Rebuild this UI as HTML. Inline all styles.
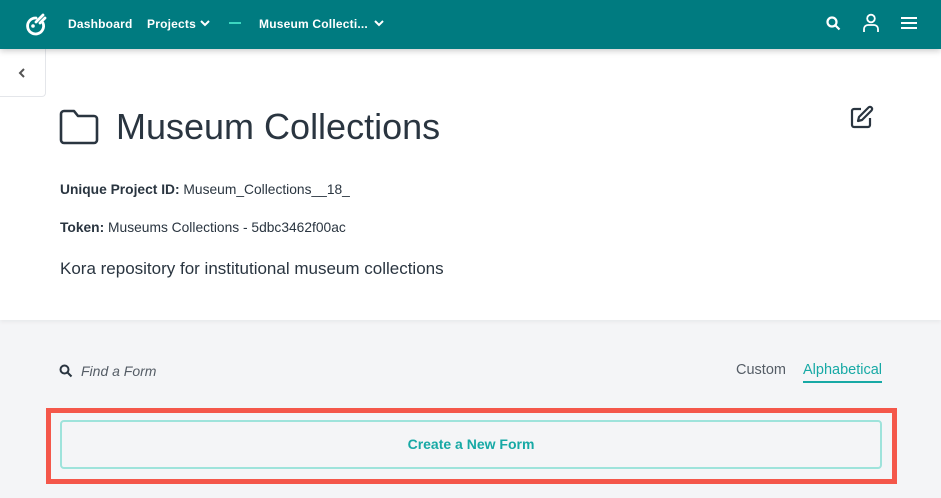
<!DOCTYPE html>
<html><head><style>
*{margin:0;padding:0;box-sizing:border-box}
body{width:941px;height:498px;overflow:hidden;background:#f4f5f7;font-family:"Liberation Sans",sans-serif;position:relative;color:#2a3540}
.nav{position:absolute;left:0;top:0;width:941px;height:49px;background:#007b80;box-shadow:0 2px 6px rgba(0,0,0,.2);z-index:2}
.nav span{position:absolute;top:17px;color:#fff;font-size:12px;font-weight:bold;letter-spacing:0.2px}
.top{position:absolute;left:0;top:49px;width:941px;height:271px;background:#fff;box-shadow:0 2px 4px rgba(0,0,0,.05)}
.back{position:absolute;left:0;top:49px;width:46px;height:48px;border:1px solid #e4e6ea;border-left:none;border-top:none;border-radius:0 0 4px 0;background:#fff}
h1{position:absolute;left:116px;top:106px;font-size:36px;font-weight:normal;color:#2a3540}
.t{position:absolute;left:60px;font-size:13.8px;color:#2a3540}
</style></head><body>
<div class="nav">
<svg style="position:absolute;left:22px;top:10px" width="28" height="28" viewBox="0 0 28 28" fill="none" stroke="#fff" stroke-width="2.8" stroke-linecap="round"><path d="M14 8a8 8 0 1 0 7 5"/><circle cx="11" cy="16" r="1.8" fill="#fff" stroke="none"/><path d="M14 12l7-7M18 13l5-5"/></svg>
<span style="left:68px">Dashboard</span>
<span style="left:147px">Projects</span>
<svg style="position:absolute;left:199px;top:19px" width="12" height="9" viewBox="0 0 12 9" fill="none" stroke="#fff" stroke-width="2"><path d="M2 2l4 4 4-4"/></svg>
<div style="position:absolute;left:229px;top:22px;width:12px;height:2px;background:#3cd6c0"></div>
<span style="left:259px">Museum Collecti...</span>
<svg style="position:absolute;left:373px;top:19px" width="12" height="9" viewBox="0 0 12 9" fill="none" stroke="#fff" stroke-width="2"><path d="M2 2l4 4 4-4"/></svg>
<svg style="position:absolute;left:825px;top:15px" width="17" height="17" viewBox="0 0 17 17" fill="none" stroke="#fff" stroke-width="2.2"><circle cx="7" cy="7" r="4.5"/><path d="M10.5 10.5l4 4"/></svg>
<svg style="position:absolute;left:862px;top:13px" width="18" height="20" viewBox="0 0 18 20" fill="none" stroke="#fff" stroke-width="1.8"><circle cx="9" cy="5.5" r="3.8"/><path d="M2 19v-3a4 4 0 0 1 4-4h6a4 4 0 0 1 4 4v3"/></svg>
<svg style="position:absolute;left:900px;top:15px" width="18" height="16" viewBox="0 0 18 16" stroke="#fff" stroke-width="2"><path d="M1 3h16M1 8h16M1 13h16"/></svg>
</div>
<div class="top"></div>
<div class="back"><svg style="position:absolute;left:17px;top:18px" width="10" height="12" viewBox="0 0 10 12" fill="none" stroke="#555" stroke-width="2"><path d="M7 2L3 6l4 4"/></svg></div>
<svg style="position:absolute;left:59px;top:109px" width="40" height="36" viewBox="0 0 40 36" fill="none" stroke="#2a3540" stroke-width="2.6" stroke-linejoin="round"><path d="M2 5a3 3 0 0 1 3-3h10l4 5h16a3 3 0 0 1 3 3v21a3 3 0 0 1-3 3H5a3 3 0 0 1-3-3z"/></svg>
<h1>Museum Collections</h1>
<svg style="position:absolute;left:850px;top:105px" width="24" height="24" viewBox="0 0 24 24" fill="none" stroke="#2a3540" stroke-width="2.2" stroke-linejoin="round"><path d="M11 4H4a2 2 0 0 0-2 2v14a2 2 0 0 0 2 2h14a2 2 0 0 0 2-2v-7"/><path d="M18.5 2.5a2.1 2.1 0 0 1 3 3L12 15l-4 1 1-4z"/></svg>
<div class="t" style="top:182px"><b>Unique Project ID:</b> Museum_Collections__18_</div>
<div class="t" style="top:220px"><b>Token:</b> Museums Collections - 5dbc3462f00ac</div>
<div class="t" style="top:259px;font-size:17px">Kora repository for institutional museum collections</div>
<svg style="position:absolute;left:59px;top:364px" width="14" height="14" viewBox="0 0 14 14" fill="none" stroke="#2a3540" stroke-width="2"><circle cx="5.5" cy="5.5" r="4"/><path d="M8.5 8.5l4 4"/></svg>
<div style="position:absolute;left:81px;top:363px;font-size:14px;font-style:italic;color:#555d66">Find a Form</div>
<div style="position:absolute;left:736px;top:362px;font-size:14.5px;color:#555d66">Custom</div>
<div style="position:absolute;left:803px;top:362px;font-size:14.5px;color:#17a9a5;border-bottom:2px solid #17a9a5;padding-bottom:3px">Alphabetical</div>
<div style="position:absolute;left:46px;top:408px;width:851px;height:76px;border:5px solid #f4574a"></div>
<div style="position:absolute;left:60px;top:420px;width:822px;height:49px;border:2px solid #9ee3db;border-radius:4px;text-align:center;line-height:45px;font-size:14px;font-weight:bold;color:#17a9a5">Create a New Form</div>
</body></html>
